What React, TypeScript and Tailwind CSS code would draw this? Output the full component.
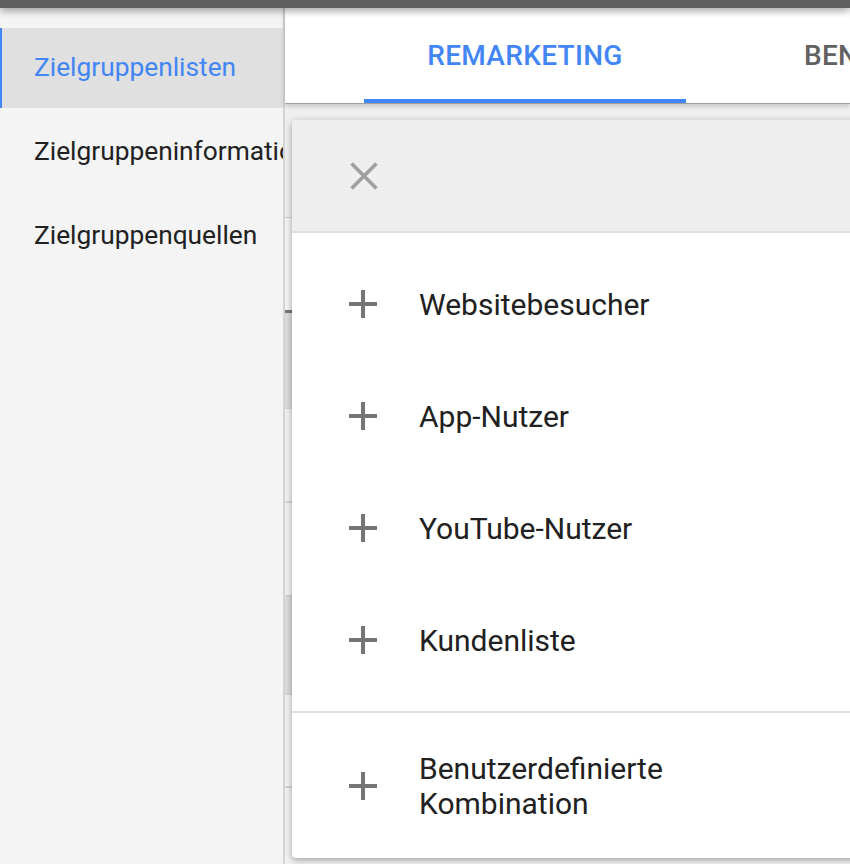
import React from 'react';

const sideItems = ['Zielgruppenlisten', 'Zielgruppeninformationen', 'Zielgruppenquellen'];

const menuItems = ['Websitebesucher', 'App-Nutzer', 'YouTube-Nutzer', 'Kundenliste'];

// background table rows peeking out left of the popup
const bgRows = [
  { h: 'h-[96px]', dark: true },
  { h: 'h-[94px]', dark: false },
  { h: 'h-[94px]', dark: false },
  { h: 'h-[98px]', dark: true },
  { h: 'h-[93px]', dark: false },
  { h: 'h-[93px]', dark: false },
];

const PlusIcon = () => (
  <svg width="28" height="28" viewBox="0 0 28 28" className="shrink-0">
    <path d="M14 0v28M0 14h28" stroke="#757575" strokeWidth="4" fill="none" />
  </svg>
);

const CloseIcon = () => (
  <svg width="28" height="28" viewBox="0 0 28 28">
    <path d="M1.5 1.5l25 25M26.5 1.5l-25 25" stroke="#9e9e9e" strokeWidth="3.5" fill="none" />
  </svg>
);

export default function App() {
  return (
    <div className="w-[850px] h-[864px] overflow-hidden bg-[#f2f2f2] font-['Roboto',sans-serif] flex flex-col">
      {/* top bar */}
      <div className="h-2 shrink-0 bg-[#5f5f5f] relative z-20 shadow-[0_2px_8px_rgba(0,0,0,0.45)]" />

      <div className="flex flex-1 min-h-0">
        {/* sidebar */}
        <div className="w-[285px] shrink-0 bg-[#f4f4f4] border-r-2 border-[#d4d4d4] flex flex-col gap-1 pt-5 overflow-hidden">
          {sideItems.map((label, i) => (
            <div
              key={label}
              className={`h-[80px] flex items-center text-[26.3px] whitespace-nowrap ${
                i === 0
                  ? 'bg-[#e0e0e0] border-l-2 border-[#4285f4] pl-[32px] text-[#4285f4]'
                  : 'pl-[34px] text-[#212121]'
              }`}
            >
              {label}
            </div>
          ))}
        </div>

        {/* main */}
        <div className="flex-1 relative flex flex-col min-w-0">
          {/* tab bar */}
          <div className="h-[96px] shrink-0 bg-white flex items-stretch relative z-10 border-b border-[#a0a0a0] shadow-[0_2px_5px_rgba(0,0,0,0.2)] whitespace-nowrap overflow-hidden">
            <div className="ml-[79px] w-[322px] shrink-0 flex items-center justify-center relative text-[28px] font-medium text-[#4285f4] tracking-[0.3px]">
              REMARKETING
              <div className="absolute left-0 right-0 bottom-0 h-1 bg-[#4285f4]" />
            </div>
            <div className="pl-[118px] shrink-0 flex items-center text-[28px] font-medium text-[#616161] tracking-[0.3px]">
              BENUTZERDEFINIERT
            </div>
          </div>

          {/* background content behind the popup */}
          <div className="flex flex-col">
            <div className="h-[114px] bg-[#efefef] border-b border-[#d0d0d0] rounded-br-[6px]" />
            <div className="h-[92px] bg-[#f4f4f4]" />
            <div className="h-[3px] bg-[#777777]" />
            {bgRows.map((r, i) => (
              <div
                key={i}
                className={`${r.h} border-b-2 border-[#d4d4d4] ${r.dark ? 'bg-[#dcdce0]' : 'bg-[#f2f2f2]'}`}
              />
            ))}
          </div>

          {/* popup menu */}
          <div className="absolute left-[7px] top-[112px] w-[640px] h-[738px] bg-white rounded-[4px] shadow-[0_2px_7px_rgba(0,0,0,0.35)] z-20 flex flex-col overflow-hidden">
            <div className="h-[113px] shrink-0 bg-[#eeeeee] border-b-2 border-[#e0e0e0] flex items-center pl-[58px]">
              <CloseIcon />
            </div>
            <div className="flex flex-col py-[15px] border-b-2 border-[#e0e0e0]">
              {menuItems.map((label) => (
                <div key={label} className="h-[112px] flex items-center pl-[57px] gap-[42px]">
                  <PlusIcon />
                  <span className="text-[30px] text-[#212121]">{label}</span>
                </div>
              ))}
            </div>
            <div className="flex-1 flex items-center pl-[57px] gap-[42px]">
              <PlusIcon />
              <span className="text-[30px] leading-[35px] text-[#212121]">
                Benutzerdefinierte
                <br />
                Kombination
              </span>
            </div>
          </div>
        </div>
      </div>
    </div>
  );
}
